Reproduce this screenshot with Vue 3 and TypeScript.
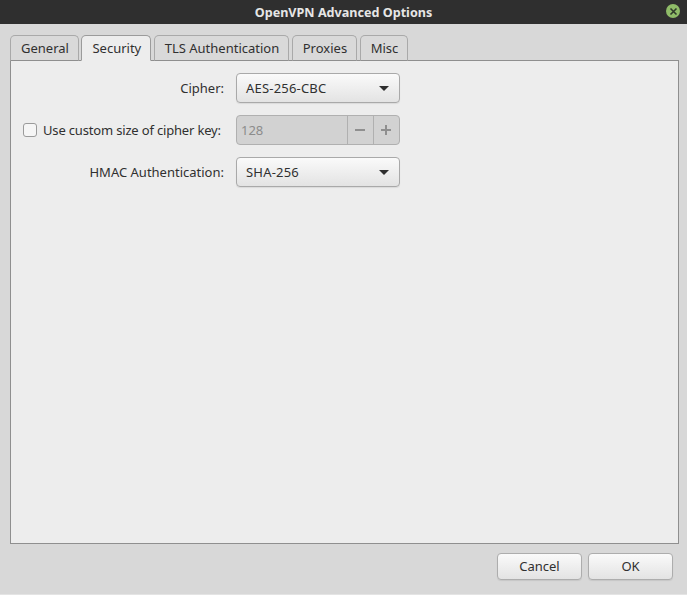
<script setup lang="ts">
const tabs: string[] = ['General', 'Security', 'TLS Authentication', 'Proxies', 'Misc']
</script>

<template>
  <div class="window">
    <header class="titlebar">
      <span class="title">OpenVPN Advanced Options</span>
      <span class="close">
        <svg width="9" height="9" viewBox="0 0 9 9"><path d="M1.5 1.5l6 6M7.5 1.5l-6 6" stroke="#2f3a2a" stroke-width="1.6" fill="none" /></svg>
      </span>
    </header>
    <main class="body">
      <nav class="tabs">
        <div v-for="t in tabs" :key="t" class="tab" :class="{ active: t === 'Security' }">{{ t }}</div>
      </nav>
      <section class="panel">
        <div class="form">
          <label class="lbl">Cipher:</label>
          <div class="combo"><span>AES-256-CBC</span><i class="arrow"></i></div>

          <label class="check"><span class="box"></span><span>Use custom size of cipher key:</span></label>
          <div class="spin">
            <span class="val">128</span>
            <span class="sbtn"><svg width="10" height="10" viewBox="0 0 10 10"><path d="M0 5h10" stroke="#8f8f8f" stroke-width="2" /></svg></span>
            <span class="sbtn"><svg width="10" height="10" viewBox="0 0 10 10"><path d="M0 5h10M5 0v10" stroke="#8f8f8f" stroke-width="2" /></svg></span>
          </div>

          <label class="lbl">HMAC Authentication:</label>
          <div class="combo"><span>SHA-256</span><i class="arrow"></i></div>
        </div>
      </section>
      <footer class="actions">
        <button class="btn">Cancel</button>
        <button class="btn">OK</button>
      </footer>
    </main>
  </div>
</template>

<style>
html, body { margin: 0; padding: 0; overflow: hidden; }
</style>

<style scoped>
.window {
  width: 687px;
  height: 595px;
  display: flex;
  flex-direction: column;
  background: #d8d8d8;
  font-family: "Noto Sans", sans-serif;
  font-size: 13px;
  color: #303030;
  box-sizing: border-box;
  border-bottom: 1px solid #e4e4e4;
}
.titlebar {
  height: 24px;
  flex: none;
  background: #2f2f2f;
  display: flex;
  align-items: center;
  justify-content: center;
  position: relative;
}
.title { color: #e6e6e6; font-weight: 700; font-size: 12.6px; }
.close {
  position: absolute;
  right: 7px;
  top: 4px;
  width: 14px;
  height: 14px;
  border-radius: 50%;
  background: #8fbc68;
  display: flex;
  align-items: center;
  justify-content: center;
}
.body { flex: 1; display: flex; flex-direction: column; padding: 11px 8px 14px 10px; min-height: 0; }
.tabs { display: flex; gap: 2.5px; height: 26px; flex: none; margin-bottom: -1px; position: relative; z-index: 1; }
.tab {
  box-sizing: border-box;
  height: 26px;
  padding: 0 9px 0 10px;
  display: flex;
  align-items: center;
  border: 1px solid #a9a9a9;
  border-bottom-color: #8f8f8f;
  border-radius: 5px 5px 0 0;
  background: #d9d9d9;
}
.tab.active { background: #ededed; border-color: #9b9b9b; border-bottom-color: #ededed; }
.panel {
  flex: 1;
  background: #ededed;
  border: 1px solid #8f8f8f;
  min-height: 0;
}
.form {
  display: grid;
  grid-template-columns: 213px 164px;
  column-gap: 12px;
  row-gap: 12px;
  padding: 12px 0 0 0;
  justify-content: start;
}
.lbl { text-align: right; align-self: center; }
.check { display: flex; align-items: center; gap: 6px; padding-left: 12px; white-space: nowrap; letter-spacing: -0.17px; }
.box {
  width: 14px;
  height: 14px;
  flex: none;
  box-sizing: border-box;
  border: 1px solid #9a9a9a;
  border-radius: 3px;
  background: #f5f5f5;
}
.combo {
  box-sizing: border-box;
  height: 30px;
  padding: 0 10px 0 9px;
  display: flex;
  align-items: center;
  justify-content: space-between;
  border: 1px solid #a9a9a9;
  border-radius: 4px;
  background: linear-gradient(#fafafa, #e3e3e3);
  box-shadow: 0 1px 1px rgba(0, 0, 0, .08);
  letter-spacing: 0.2px;
}
.arrow {
  width: 0;
  height: 0;
  border-left: 5px solid transparent;
  border-right: 5px solid transparent;
  border-top: 5px solid #2f2f2f;
}
.spin {
  box-sizing: border-box;
  height: 30px;
  display: flex;
  align-items: stretch;
  border: 1px solid #b0b0b0;
  border-radius: 4px;
  background: #d2d2d2;
  color: #8c8c8c;
}
.val { flex: 1; display: flex; align-items: center; padding-left: 4px; }
.sbtn {
  width: 25px;
  box-sizing: content-box;
  display: flex;
  align-items: center;
  justify-content: center;
  border-left: 1px solid #b0b0b0;
  padding-bottom: 1px;
}
.sbtn svg { margin-right: 1px; }
.actions { display: flex; justify-content: flex-end; gap: 6px; padding: 9px 6px 0 0; flex: none; }
.btn {
  box-sizing: border-box;
  width: 85px;
  height: 27px;
  font: inherit;
  color: inherit;
  border: 1px solid #adadad;
  border-radius: 4px;
  background: linear-gradient(#fafafa, #e3e3e3);
  box-shadow: 0 1px 1px rgba(0, 0, 0, .08);
  padding: 0 0 2px;
}
</style>
